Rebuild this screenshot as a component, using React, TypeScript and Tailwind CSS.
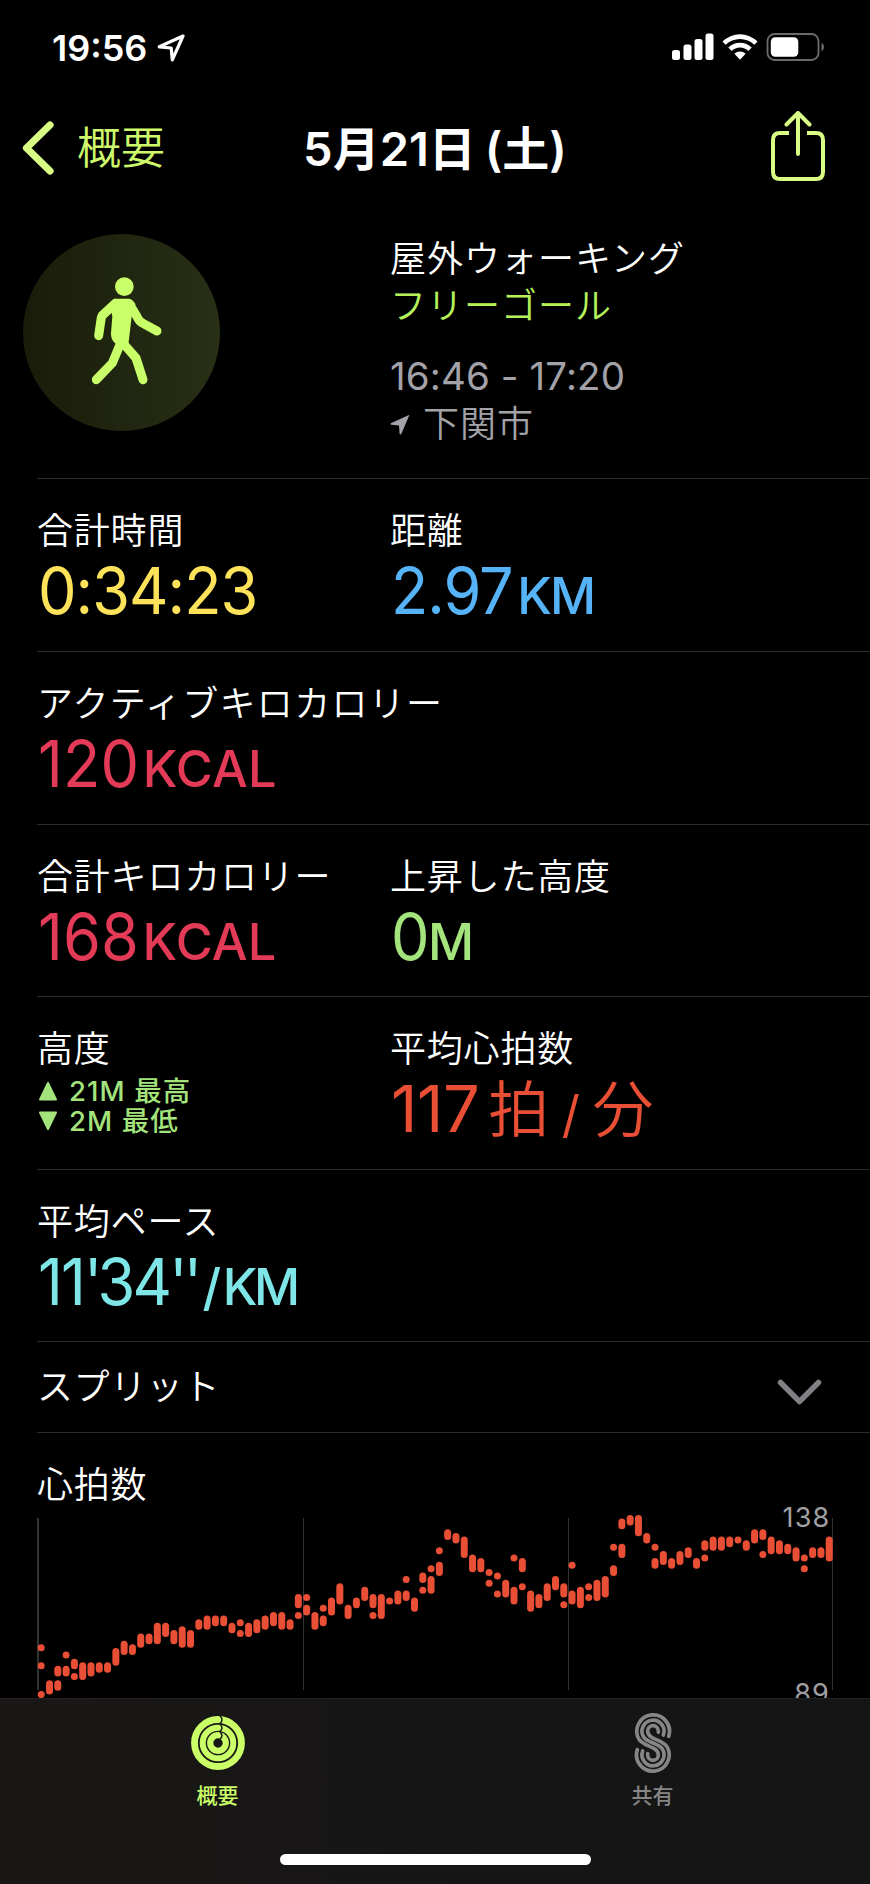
import type { ReactNode } from 'react';

type Range = [high: number, low: number];

type MetricProps = {
  label: string;
  wide?: boolean;
  children: ReactNode;
};

// One entry per time slot, each holding the bpm ranges recorded in it
const HEART_RATE: Range[][] = [
  [[102, 102], [97, 97], [89, 89]],
  [[92, 90]],
  [[96, 95], [92, 91]],
  [[100, 100], [96, 95]],
  [[98, 97], [94, 94]],
  [[97, 94]], [[97, 95]], [[97, 96]], [[97, 96]], [[101, 98]],
  [[103, 101]], [[102, 101]], [[105, 103]], [[105, 104]], [[108, 104]],
  [[108, 106]], [[106, 104]], [[107, 103]], [[106, 103]], [[109, 108]],
  [[110, 108]], [[110, 109]], [[110, 109]], [[108, 107]],
  [[109, 109], [106, 106]],
  [[108, 106]], [[109, 107]], [[110, 108]], [[111, 109]], [[111, 108]],
  [[109, 108]],
  [[116, 114], [111, 111]],
  [[116, 116], [113, 112]],
  [[111, 108]],
  [[113, 113], [110, 109]],
  [[115, 112]], [[119, 115]], [[113, 111]], [[115, 114]], [[118, 116]],
  [[116, 114], [111, 111]],
  [[116, 111]], [[115, 115]], [[117, 115]],
  [[121, 121], [117, 116]],
  [[115, 113]],
  [[122, 121], [118, 118]],
  [[124, 124], [121, 118]],
  [[129, 129], [125, 123]],
  [[134, 133]], [[133, 132]], [[132, 128]], [[127, 124]], [[126, 124]],
  [[123, 123], [120, 120]],
  [[122, 122], [117, 117]],
  [[120, 117]],
  [[127, 127], [118, 115]],
  [[126, 124], [119, 119]],
  [[117, 113]], [[116, 114]], [[119, 116]], [[121, 119]],
  [[119, 117], [114, 114]],
  [[125, 125], [117, 115]],
  [[118, 114]],
  [[119, 119], [116, 116]],
  [[120, 116]], [[121, 117]],
  [[130, 130], [124, 123]],
  [[137, 136], [130, 128]],
  [[138, 137]], [[138, 134]], [[133, 132]],
  [[130, 130], [126, 125]],
  [[128, 126]], [[126, 125]], [[128, 126]], [[129, 128]], [[126, 125]],
  [[131, 130], [127, 127]],
  [[132, 130]], [[132, 130]], [[132, 131]], [[132, 132]], [[131, 130]],
  [[134, 132]],
  [[134, 133], [128, 128]],
  [[132, 129]], [[131, 129]], [[130, 129]], [[129, 127]],
  [[127, 127], [124, 124]],
  [[129, 128]], [[129, 128]], [[132, 127]],
];

const MAX_BPM = 138;
const BPM_HEIGHT = 3.592;
const SLOT_WIDTH = 8.295;

function StatusBar() {
  return (
    <div className="flex h-[96px] shrink-0 items-center justify-between pr-[45px] pl-[52px]">
      <div className="mb-px flex items-center gap-[10px]">
        <span className="text-[36px] leading-none font-semibold">19:56</span>
        <svg width="28" height="28" viewBox="0 0 28 28" fill="none" stroke="white" strokeWidth="3.2" strokeLinejoin="round">
          <path d="M26 2 L2.3 12.8 L14.2 14 L15.3 25.8 Z" />
        </svg>
      </div>
      <svg className="mb-[2px]" width="153" height="28" viewBox="0 0 153 28" fill="white">
        <rect x="0" y="17" width="8" height="10" rx="2.5" />
        <rect x="11.5" y="11.5" width="8" height="15.5" rx="2.5" />
        <rect x="22.5" y="6" width="8" height="21" rx="2.5" />
        <rect x="33.5" y="0.5" width="8" height="26.5" rx="2.5" />
        <path d="M50.5 8.6 A24.5 24.5 0 0 1 85.5 8.6 L82.3 11.8 A20.3 20.3 0 0 0 53.7 11.8 Z" />
        <path d="M56.3 14.6 A16.4 16.4 0 0 1 79.7 14.6 L76.4 17.9 A11.8 11.8 0 0 0 59.6 17.9 Z" />
        <path d="M62.4 20.8 A7.8 7.8 0 0 1 73.6 20.8 L68 26.8 Z" />
        <rect x="95.5" y="1" width="51" height="26" rx="7" fill="none" stroke="#6b6b6b" strokeWidth="1.8" />
        <rect x="98.8" y="4.2" width="27.5" height="19.6" rx="4.5" />
        <path d="M149.5 9.8 C152.8 11.4 152.8 16.6 149.5 18.2 Z" fill="#6b6b6b" />
      </svg>
    </div>
  );
}

function NavBar() {
  return (
    <div className="grid h-[104px] shrink-0 grid-cols-[1fr_auto_1fr] items-center pr-[44px] pl-[22px]">
      <button className="flex items-center gap-[22px] text-[#cdf86c]">
        <svg width="33" height="54" viewBox="0 0 33 54" fill="none" stroke="#d9fc85" strokeWidth="7.2" strokeLinecap="round" strokeLinejoin="round">
          <path d="M28 4 L4.5 27 L28 50" />
        </svg>
        <span className="text-[44px] leading-none font-[350]">概要</span>
      </button>
      <h1 className="ml-[22px] text-[47px] leading-none font-semibold whitespace-nowrap">
        5月21日<span className="ml-[9px]">(土)</span>
      </h1>
      <svg className="mb-[4px] justify-self-end" width="56" height="70" viewBox="0 0 56 70" fill="none" stroke="#d9fc85" strokeWidth="4">
        <path d="M19 22 H10 Q3 22 3 29 V61 Q3 68 10 68 H46 Q53 68 53 61 V29 Q53 22 46 22 H37" />
        <path d="M28 43 V3 M16.5 13.5 L28 2 L39.5 13.5" strokeLinecap="round" strokeLinejoin="round" />
      </svg>
    </div>
  );
}

function WorkoutHeader() {
  return (
    <div className="flex h-[278.4px] shrink-0 pl-[23px]">
      <div className="mt-[34px] mr-[170px] flex size-[197px] items-center justify-center rounded-full bg-linear-to-r from-[#191c09] to-[#283016]">
        <svg width="197" height="197" viewBox="70 43 591 591" fill="#c9ff68" stroke="#c9ff68" strokeLinecap="round" strokeLinejoin="round">
          <circle cx="374" cy="201" r="28" stroke="none" />
          <path strokeWidth="8" d="M346 241 H384 Q396 243 403 254 L392 290 L385 350 L382 374 L349 368 Q337 356 338 340 L342 290 L334 252 Z" />
          <path fill="none" strokeWidth="27" d="M347 251 L308 287 Q305 292 304 300 L297 348" />
          <path fill="none" strokeWidth="27" d="M388 251 L412 291 Q418 305 430 311 L472 334" />
          <path fill="none" strokeWidth="27" d="M364 368 L338 430 L290 480" />
          <path fill="none" strokeWidth="27" d="M368 368 L409 415 L430 480" />
        </svg>
      </div>
      <div className="pt-[36px] text-[36px] leading-[47px] tracking-[1px]">
        <p className="font-[350]">屋外ウォーキング</p>
        <p className="font-[350] text-[#b5f25a]">フリーゴール</p>
        <p className="mt-[23px] text-[38.5px] tracking-[0.1px] text-[#a2a2a8]">16:46 - 17:20</p>
        <p className="mt-px flex items-center gap-[13px] font-[350] text-[#a2a2a8]">
          <svg width="20" height="21" viewBox="0 0 20 21" fill="#a2a2a8">
            <path d="M19.5 0.8 L0.8 9.2 Q0 10.4 1.2 10.8 L9 11.4 L9.6 19.8 Q10.6 21 11.4 19.8 Z" />
          </svg>
          下関市
        </p>
      </div>
    </div>
  );
}

function MetricRow({ children }: { children: ReactNode }) {
  return (
    <div className="ml-[37px] grid h-[172.6px] shrink-0 grid-cols-[353px_1fr] border-t border-[#2b2b2b] pl-px">
      {children}
    </div>
  );
}

function Metric({ label, wide = false, children }: MetricProps) {
  return (
    <div className="pt-[30px] whitespace-nowrap">
      <p className={`-ml-px text-[36px] leading-[44px] font-[350] ${wide ? 'tracking-[1.3px]' : 'tracking-[0.8px]'}`}>
        {label}
      </p>
      {children}
    </div>
  );
}

// Slightly condensed figures
function Digits({ children }: { children: ReactNode }) {
  return <span className="inline-block origin-left scale-x-[0.94]">{children}</span>;
}

function HeartRateChart() {
  return (
    <svg className="block shrink-0 overflow-visible" width="870" height="193" viewBox="0 1505 870 193">
      <g stroke="#333333">
        <path strokeWidth="2" d="M38 1518 V1690" />
        <path d="M303.5 1518 V1690 M568.5 1518 V1690 M832.5 1518 V1690" />
      </g>
      <g fill="#a0a0a4" fontSize="27" letterSpacing="1.2" textAnchor="end">
        <text x="830.5" y="1527">138</text>
        <text x="830" y="1703">89</text>
      </g>
      <g fill="#e94f35">
        {HEART_RATE.map((ranges, slot) =>
          ranges.map(([high, low]) => (
            <rect
              key={`${slot}-${high}`}
              x={37.7 + slot * SLOT_WIDTH}
              y={1515 + (MAX_BPM - high) * BPM_HEIGHT}
              width={7}
              height={7 + (high - low) * BPM_HEIGHT}
              rx={3.5}
            />
          )),
        )}
      </g>
    </svg>
  );
}

function RingsIcon() {
  return (
    <svg width="54" height="54" viewBox="0 0 54 54" fill="none">
      <g stroke="#caff67">
        <circle cx="27" cy="27" r="23.5" strokeWidth="6.8" />
        <circle cx="27" cy="27" r="15.3" strokeWidth="6" />
        <circle cx="27" cy="27" r="7.8" strokeWidth="6.2" />
      </g>
      <path
        stroke="#1b1c12"
        strokeWidth="1.5"
        d="M29 0 Q33 3.6 29 7.5 M29 8.2 Q33 11.6 29 15.2 M29 16.2 Q33 19.5 29 23"
      />
    </svg>
  );
}

function SharingIcon() {
  return (
    <svg width="40" height="62" viewBox="158 65 120 186" fill="none" stroke="#868686" strokeWidth="11" strokeLinecap="round">
      <path d="M265 138 A49 49 0 1 0 176 147 C191 170 234 168 234 194 A16 16 0 0 1 202 194 V190" />
      <path d="M249 134 A33 33 0 1 0 190 140 C201 158 235 158 246 176 A33 33 0 1 1 187 182" />
      <path d="M234 126 V122 A16 16 0 0 0 202 122 C202 148 245 146 260 169 A49 49 0 1 1 171 178" />
    </svg>
  );
}

function TabBar() {
  return (
    <div className="flex h-[186px] shrink-0 flex-col items-center border-t border-[#202020] bg-linear-to-r from-[#1b1716] to-[#151515] to-60%">
      <div className="grid w-full grid-cols-2 text-[21px] font-medium">
        <button className="flex flex-col items-center pt-[12px] text-[#caff67]">
          <span className="flex h-[64px] items-center">
            <RingsIcon />
          </span>
          <span className="mt-[6px] leading-[30px]">概要</span>
        </button>
        <button className="flex flex-col items-center pt-[12px] text-[#868686]">
          <span className="flex h-[64px] items-center">
            <SharingIcon />
          </span>
          <span className="mt-[6px] leading-[30px]">共有</span>
        </button>
      </div>
      <div className="mt-[43px] h-[11px] w-[311px] rounded-full bg-white" />
    </div>
  );
}

export default function App() {
  return (
    <div className="flex h-[1884px] w-[870px] flex-col overflow-hidden bg-black font-['Inter','Noto_Sans_CJK_JP',sans-serif] text-white">
      <main className="flex min-h-0 flex-1 flex-col overflow-hidden">
        <StatusBar />
        <NavBar />
        <WorkoutHeader />

        <MetricRow>
          <Metric label="合計時間">
            <p className="text-[65px] leading-[76px] tracking-[-1px] text-[#fde25a]">
              <Digits>0:34:23</Digits>
            </p>
          </Metric>
          <Metric label="距離">
            <p className="text-[65px] leading-[76px] tracking-[-1.1px] text-[#56b3f7]">
              <Digits>2.97</Digits>
              <span className="-ml-[3px] text-[50.5px] font-medium tracking-[-2px]">KM</span>
            </p>
          </Metric>
        </MetricRow>

        <MetricRow>
          <Metric label="アクティブキロカロリー" wide>
            <p className="text-[65px] leading-[76px] tracking-[0.2px] text-[#e33b57]">
              <Digits>120</Digits>
              <span className="-ml-[3px] text-[50.5px] font-medium">KCAL</span>
            </p>
          </Metric>
        </MetricRow>

        <MetricRow>
          <Metric label="合計キロカロリー">
            <p className="text-[65px] leading-[76px] tracking-[0.2px] text-[#e33b57]">
              <Digits>168</Digits>
              <span className="-ml-[3px] text-[50.5px] font-medium">KCAL</span>
            </p>
          </Metric>
          <Metric label="上昇した高度">
            <p className="text-[65px] leading-[76px] tracking-[-3.9px] text-[#a4e47c]">
              <Digits>0</Digits>
              <span className="text-[50.5px] font-medium">M</span>
            </p>
          </Metric>
        </MetricRow>

        <MetricRow>
          <Metric label="高度">
            <div className="mt-[5px] text-[27.5px] leading-[30px] font-medium tracking-[1.1px] text-[#a4e47c]">
              <p className="flex items-center gap-[11px]">
                <svg width="20" height="20" viewBox="0 0 20 20" fill="#a4e47c" stroke="#a4e47c" strokeWidth="2" strokeLinejoin="round">
                  <path d="M10 2 L18 18.5 H2 Z" />
                </svg>
                21M 最高
              </p>
              <p className="flex items-center gap-[11px]">
                <svg width="20" height="20" viewBox="0 0 20 20" fill="#a4e47c" stroke="#a4e47c" strokeWidth="2" strokeLinejoin="round">
                  <path d="M10 18 L18 1.5 H2 Z" />
                </svg>
                2M 最低
              </p>
            </div>
          </Metric>
          <Metric label="平均心拍数">
            <p className="text-[65px] leading-[76px] tracking-[-0.5px] text-[#e94f35]">
              117<span className="ml-[9px] text-[61px] font-[350] tracking-[-1.5px]">拍</span>
              <span className="mr-[14px] ml-[14px] text-[50.5px] tracking-[-1.5px]">/</span>
              <span className="text-[61px] font-[350]">分</span>
            </p>
          </Metric>
        </MetricRow>

        <MetricRow>
          <Metric label="平均ペース">
            <p className="text-[65px] leading-[76px] text-[#7ee6e6]">
              <Digits>
                <span className="tracking-[-2px]">11</span>
                <span className="tracking-[-5px]">'</span>
                <span className="tracking-[-3px]">34</span>
                <span className="tracking-[-4px]">''</span>
              </Digits>
              <span className="-ml-[6px] text-[50.5px] font-medium tracking-[-3.5px]">
                <span className="mr-[5px]">/</span>KM
              </span>
            </p>
          </Metric>
        </MetricRow>

        <div className="ml-[37px] flex h-[91.6px] shrink-0 items-center justify-between border-y border-[#2b2b2b] pr-[48px]">
          <span className="text-[36px] leading-[44px] font-[350] tracking-[0.6px]">スプリット</span>
          <svg className="mt-[10px]" width="45" height="27" viewBox="0 0 45 27" fill="none" stroke="#808085" strokeWidth="5.5" strokeLinecap="round" strokeLinejoin="round">
            <path d="M3.5 3.5 L22.5 22.5 L41.5 3.5" />
          </svg>
        </div>

        <h2 className="mt-[30px] h-[42px] shrink-0 pl-[37px] text-[36px] leading-[44px] font-[350] tracking-[0.8px]">
          心拍数
        </h2>
        <HeartRateChart />
      </main>
      <TabBar />
    </div>
  );
}
